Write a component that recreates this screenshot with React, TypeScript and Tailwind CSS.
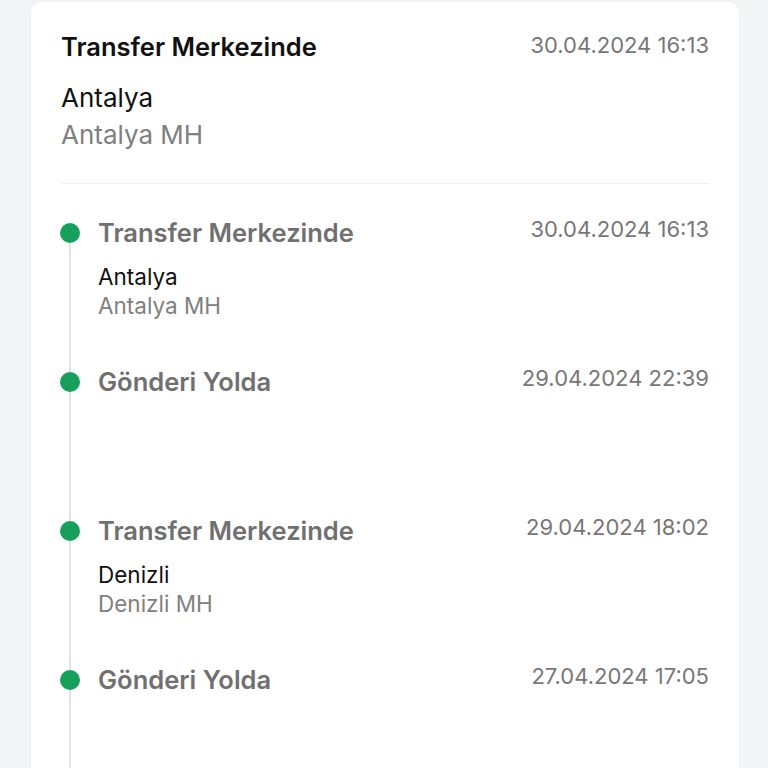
const events = [
  { title: 'Transfer Merkezinde', date: '30.04.2024 16:13', city: 'Antalya', center: 'Antalya MH' },
  { title: 'Gönderi Yolda', date: '29.04.2024 22:39' },
  { title: 'Transfer Merkezinde', date: '29.04.2024 18:02', city: 'Denizli', center: 'Denizli MH' },
  { title: 'Gönderi Yolda', date: '27.04.2024 17:05' },
];

const App = () => {
  return (
    <div
      className="min-h-screen w-full bg-[#f3f4f6] pl-[31px] pr-[29px] pt-[2px]"
      style={{ fontFamily: 'Inter, "Noto Sans", sans-serif' }}
    >
      <div className="min-h-[766px] rounded-t-[10px] bg-white px-[30px] pt-[31px] shadow-[0_0_3px_rgba(0,0,0,0.04)]">
        {/* Header */}
        <div className="flex items-start justify-between">
          <h1 className="text-[25.5px] leading-[28px] font-semibold text-[#111111]">Transfer Merkezinde</h1>
          <span className="mt-[1px] text-[22px] leading-[22px] text-[#777777]">30.04.2024 16:13</span>
        </div>
        <div className="mt-[18px] text-[26px] leading-[37px] text-[#111111]">Antalya</div>
        <div className="text-[26px] leading-[37px] text-[#808080]">Antalya MH</div>
        <div className="mt-[30px] h-px bg-[#f0f0f2]" />

        {/* Timeline */}
        <div className="-ml-[1px] pt-[35px]">
          {events.map((ev, i) => (
            <div key={i} className="flex h-[149px]">
              <div className="flex w-5 flex-col items-center">
                <div className={i === 0 ? 'h-1 w-[2px]' : 'h-1 w-[2px] bg-[#e3e3e5]'} />
                <div className="h-5 w-5 shrink-0 rounded-full bg-[#17a05b]" />
                <div className="w-[2px] flex-1 bg-[#e3e3e5]" />
              </div>
              <div className="ml-[18px] flex-1">
                <div className="flex items-start justify-between">
                  <span className="text-[25.5px] leading-[28px] font-semibold text-[#707070]">{ev.title}</span>
                  <span className="-mt-[1px] text-[22px] leading-[22px] text-[#777777]">{ev.date}</span>
                </div>
                {ev.city && (
                  <div className="mt-[15px]">
                    <div className="text-[22.5px] leading-[29px] text-[#111111]">{ev.city}</div>
                    <div className="text-[22.5px] leading-[29px] text-[#808080]">{ev.center}</div>
                  </div>
                )}
              </div>
            </div>
          ))}
        </div>
      </div>
    </div>
  );
};

export default App;
